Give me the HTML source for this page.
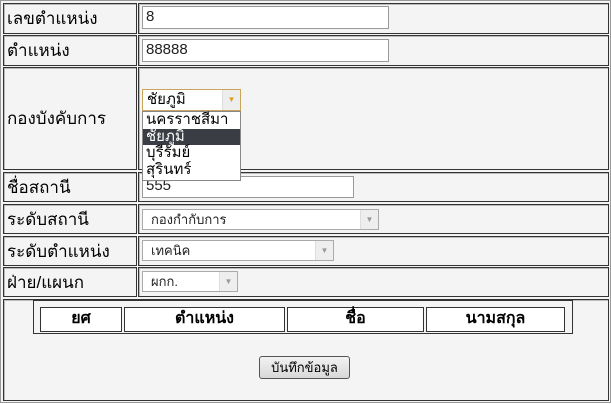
<!DOCTYPE html>
<html><head><meta charset="utf-8"><style>
*{box-sizing:border-box;margin:0;padding:0}
body{width:611px;height:404px;background:#fff;position:relative;overflow:hidden;font-family:"Liberation Sans",Tahoma,sans-serif;color:#000}
.o{position:absolute;left:0;top:0;width:611px;height:403px;border:1px solid #999;background:#f4f4f4}
.c{position:absolute;border:1px solid #333;box-shadow:inset 1px 1px 0 #bbb}
.l{font-size:17px;display:flex;align-items:center;padding-left:3px}
.in{position:absolute;background:#fff;border:1px solid #999;font-size:15px;padding-left:3px;line-height:20px;color:#222}
.sel{position:absolute;background:#fff;border:1px solid #aaa;font-size:13px;padding-left:8px;line-height:19px;color:#222}
.sel b{position:absolute;right:0;top:0;width:18px;height:100%;border-left:1px solid #ddd;background:#eee;color:#999;font-size:8px;text-align:center;font-weight:normal}
.h{position:absolute;background:#fff;border:1px solid #333;font-size:16px;font-weight:bold;text-align:center;line-height:22px}
</style></head><body>
<div class="o"></div>
<div class="c l" style="left:3px;top:3px;width:134px;height:31px">เลขตำแหน่ง</div>
<div class="c" style="left:138px;top:3px;width:471px;height:31px"></div>
<div class="c l" style="left:3px;top:35px;width:134px;height:31px">ตำแหน่ง</div>
<div class="c" style="left:138px;top:35px;width:471px;height:31px"></div>
<div class="c l" style="left:3px;top:67px;width:134px;height:103px">กองบังคับการ</div>
<div class="c" style="left:138px;top:67px;width:471px;height:103px"></div>
<div class="c l" style="left:3px;top:172px;width:134px;height:30px">ชื่อสถานี</div>
<div class="c" style="left:138px;top:172px;width:471px;height:30px"></div>
<div class="c l" style="left:3px;top:204px;width:134px;height:30px">ระดับสถานี</div>
<div class="c" style="left:138px;top:204px;width:471px;height:30px"></div>
<div class="c l" style="left:3px;top:236px;width:134px;height:30px">ระดับตำแหน่ง</div>
<div class="c" style="left:138px;top:236px;width:471px;height:30px"></div>
<div class="c l" style="left:3px;top:267px;width:134px;height:30px">ฝ่าย/แผนก</div>
<div class="c" style="left:138px;top:267px;width:471px;height:30px"></div>
<div class="c" style="left:3px;top:299px;width:606px;height:102px"></div>

<div class="in" style="left:142px;top:6px;width:247px;height:23px">8</div>
<div class="in" style="left:142px;top:39px;width:247px;height:23px">88888</div>
<div class="in" style="left:142px;top:176px;width:212px;height:22px;line-height:18px">555</div>
<div class="sel" style="left:142px;top:209px;width:237px;height:21px">กองกำกับการ<b>▼</b></div>
<div class="sel" style="left:142px;top:240px;width:192px;height:21px">เทคนิค<b>▼</b></div>
<div class="sel" style="left:142px;top:271px;width:96px;height:21px">ผกก.<b>▼</b></div>

<div class="sel" style="left:142px;top:89px;width:99px;height:22px;border-color:#c9a55a;font-size:15px;padding-left:4px;line-height:20px;color:#000">ชัยภูมิ<b style="color:#e0a020">▼</b></div>
<div style="position:absolute;left:142px;top:111px;width:99px;height:70px;background:#fff;border:1px solid #888;font-size:15px;line-height:16.5px;color:#000">
<div style="padding-left:3px">นครราชสีมา</div>
<div style="padding-left:3px;background:#3b3d45;color:#fff">ชัยภูมิ</div>
<div style="padding-left:3px">บุรีรัมย์</div>
<div style="padding-left:3px">สุรินทร์</div>
</div>

<div style="position:absolute;left:33px;top:300px;width:540px;height:34px;border:1px solid #333;background:#f4f4f4"></div>
<div class="h" style="left:40px;top:307px;width:82px;height:25px">ยศ</div>
<div class="h" style="left:124px;top:307px;width:161px;height:25px">ตำแหน่ง</div>
<div class="h" style="left:287px;top:307px;width:137px;height:25px">ชื่อ</div>
<div class="h" style="left:426px;top:307px;width:139px;height:25px">นามสกุล</div>
<div style="position:absolute;left:259px;top:356px;width:91px;height:23px;border:1px solid #555;border-radius:3px;background:linear-gradient(#f2f2f2,#d8d8d8);font-size:13px;text-align:center;line-height:21px">บันทึกข้อมูล</div>
</body></html>
